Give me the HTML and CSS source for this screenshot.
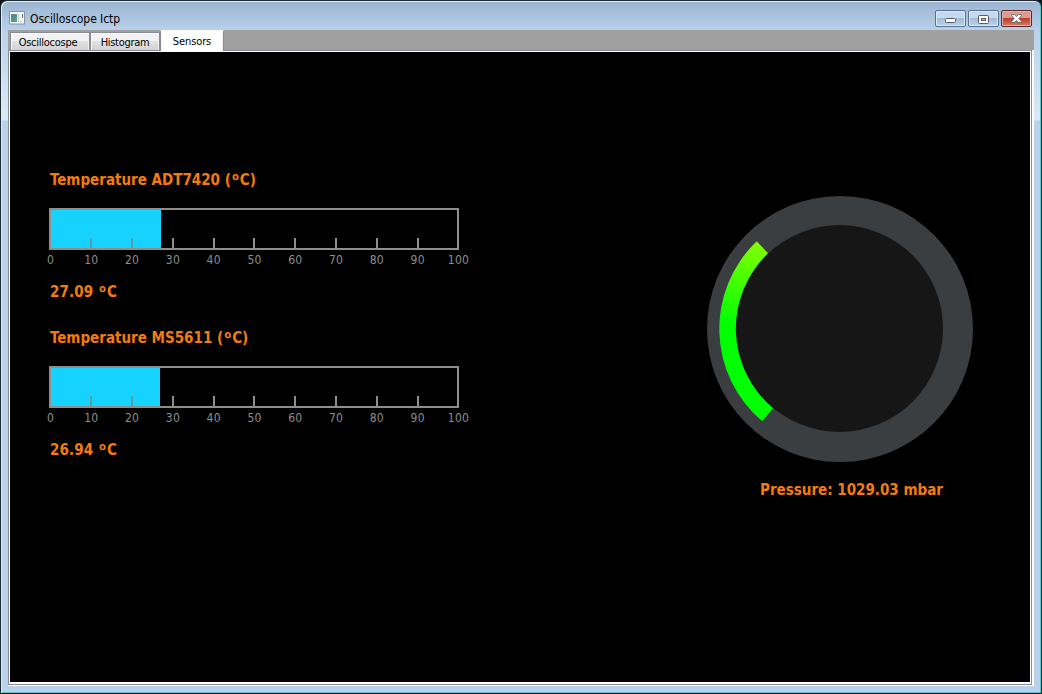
FILE: index.html
```html
<!DOCTYPE html>
<html lang="en">
<head>
<meta charset="utf-8">
<title>Oscilloscope Ictp</title>
<link rel="stylesheet" href="styles.css">
</head>
<body>
<div class="window">
  <header class="titlebar">
    <svg class="app-icon" width="16" height="14" viewBox="0 0 16 14">
      <defs><linearGradient id="ic" x1="0" y1="0" x2="1" y2="1"><stop offset="0" stop-color="#4b7fa6"/><stop offset="1" stop-color="#58a878"/></linearGradient></defs>
      <rect x=".5" y=".5" width="15" height="12.500" fill="#f4f6f6" stroke="#8b9399"/>
      <rect x="2" y="3" width="6" height="8" fill="url(#ic)"/>
      <path d="M9.500 3v8M11 10.500h2" stroke="#c4cacc" fill="none"/>
      <path d="M13.500 3v4" stroke="#477486" fill="none"/>
    </svg>
    <h1 class="title">Oscilloscope Ictp</h1>
    <div class="controls">
      <button class="control" aria-label="Minimize"><svg width="11" height="5"><rect x=".5" y=".5" width="10" height="4" rx="1" fill="#fff" stroke="#535b68"/></svg></button>
      <button class="control" aria-label="Maximize"><svg width="11" height="9"><rect x=".5" y=".5" width="10" height="8" rx="1" fill="#fff" stroke="#535b68"/><rect x="3.500" y="3.500" width="4" height="2" fill="#a9c3df" stroke="#535b68"/></svg></button>
      <button class="control close" aria-label="Close"><svg width="11" height="9" viewBox="0 0 11 9"><path d="M.5.5h3l2 2 2-2h3v1l-2.600 3 2.600 3v1h-3l-2-2-2 2h-3v-1l2.600-3-2.600-3z" fill="#fff" stroke="#555c6b" stroke-width=".8"/></svg></button>
    </div>
  </header>
  <main class="client">
    <nav class="tabs">
      <div class="tab first">Oscillocospe</div>
      <div class="tab second">Histogram</div>
      <div class="tab active">Sensors</div>
    </nav>
    <div class="pane">
      <section class="view">
        <div class="thermometers">
          <article class="thermo">
            <h2 class="label">Temperature ADT7420 (<span class="degree">º</span>C)</h2>
            <svg class="scale" width="410" height="42">
              <rect x="1" y="1" width="408" height="40" fill="none" stroke="#8e8e8e" stroke-width="2"/>
              <rect x="2" y="2" width="110" height="38" fill="#16d2ff"/>
              <path d="M42 30v10M83 30v10" stroke="#5d9aa9" stroke-width="2"/>
              <path d="M124 30v10M165 30v10M205 30v10M246 30v10M287 30v10M328 30v10M369 30v10" stroke="#8e8e8e" stroke-width="2"/>
            </svg>
            <div class="numbers"><span>0</span><span>10</span><span>20</span><span>30</span><span>40</span><span>50</span><span>60</span><span>70</span><span>80</span><span>90</span><span>100</span></div>
            <p class="label value">27.09 <span class="degree">º</span>C</p>
          </article>
          <article class="thermo">
            <h2 class="label">Temperature MS5611 (<span class="degree">º</span>C)</h2>
            <svg class="scale" width="410" height="42">
              <rect x="1" y="1" width="408" height="40" fill="none" stroke="#8e8e8e" stroke-width="2"/>
              <rect x="2" y="2" width="109" height="38" fill="#16d2ff"/>
              <path d="M42 30v10M83 30v10" stroke="#5d9aa9" stroke-width="2"/>
              <path d="M124 30v10M165 30v10M205 30v10M246 30v10M287 30v10M328 30v10M369 30v10" stroke="#8e8e8e" stroke-width="2"/>
            </svg>
            <div class="numbers"><span>0</span><span>10</span><span>20</span><span>30</span><span>40</span><span>50</span><span>60</span><span>70</span><span>80</span><span>90</span><span>100</span></div>
            <p class="label value">26.94 <span class="degree">º</span>C</p>
          </article>
        </div>
        <div class="pressure">
          <svg class="dial" width="266" height="266" viewBox="0 0 266 266">
            <defs><linearGradient id="arc" gradientUnits="userSpaceOnUse" x1="40" y1="45" x2="16" y2="128"><stop offset="0" stop-color="#80ff00"/><stop offset="1" stop-color="#00ff00"/></linearGradient></defs>
            <circle cx="133" cy="133" r="133" fill="#3b3e40"/>
            <circle cx="132.500" cy="132.500" r="103.500" fill="#161616"/>
            <path d="M55.300 225.300A121 121 0 0 1 49.700 45.300L61 57.300A104 104 0 0 0 66 212.300Z" fill="url(#arc)"/>
          </svg>
          <p class="label reading">Pressure: 1029.03 mbar</p>
        </div>
      </section>
    </div>
  </main>
</div>
</body>
</html>
```
FILE: styles.css
```css
* { box-sizing: border-box; }
body {
  margin: 0;
  background: #10171c;
  font-family: "DejaVu Sans Condensed", "DejaVu Sans", sans-serif;
  font-stretch: condensed;
}
h1, h2, p { margin: 0; font-weight: normal; }
.window {
  width: 1042px;
  height: 694px;
  padding: 0 7px 7px;
  border: 1px solid #1b2830;
  border-bottom-color: #000;
  border-radius: 7px 7px 0 0;
  background: linear-gradient(#9bb4d1 0, #b9d1ea 30px, #cbdff2 75px, #dce9f7 119px, #b9d1ea 120px);
  box-shadow: inset 1px 1px #e2edf7, inset -1px -1px #55c4d3;
}
.titlebar {
  display: flex;
  height: 29px;
  padding-left: 1px;
}
.app-icon { margin: 10px 5px 0 0; }
.title {
  flex: 1;
  padding-top: 10px;
  font-size: 12px;
  line-height: 16px;
  letter-spacing: -0.05px;
  color: #000;
}
.controls {
  display: flex;
  gap: 2px;
  padding: 9px 2px 0 0;
}
.control {
  display: flex;
  align-items: center;
  justify-content: center;
  width: 31px;
  height: 17px;
  padding: 1px 0 0;
  border: 1px solid #56708f;
  border-radius: 2px;
  background: linear-gradient(#c6d9ed 0 45%, #9fb9d6 46%, #bcd4eb);
  box-shadow: inset 0 0 0 1px #dce9f5;
}
.control:first-child { padding-top: 4px; }
.control svg { display: block; }
.control.close {
  padding-top: 0;
  border-color: #5b2929;
  background: linear-gradient(#df9b91 0 45%, #bd3a29 46%, #d47b63);
  box-shadow: inset 0 0 0 1px #e7b2a8;
}
.client {
  width: 1026px;
  height: 656px;
  background: #fff;
}
.tabs {
  display: flex;
  align-items: flex-end;
  height: 20px;
  padding-left: 2px;
  background: #a0a0a0;
}
.tab {
  height: 18px;
  border: 1px solid #898c95;
  border-width: 1px 1px 0;
  background: linear-gradient(#f2f2f2 0 48%, #e2e2e2 50%, #d2d2d2);
  box-shadow: inset 1px 1px #fafafa, inset -1px 0 #f2f2f2;
  font-size: 11px;
  line-height: 19px;
  letter-spacing: -0.3px;
  text-align: center;
  white-space: nowrap;
}
.tab.first { width: 80px; padding-right: 4px; letter-spacing: -0.25px; }
.tab.second { width: 70px; }
.tab.active {
  position: relative;
  width: 64px;
  height: 21px;
  margin-bottom: -1px;
  border-top-color: #fff;
  background: #fff;
  line-height: 21px;
  letter-spacing: -0.1px;
}
.pane {
  width: 1024px;
  height: 635px;
  border: 1px solid #898c95;
  padding: 1px 1px 2px;
}
.view {
  display: flex;
  justify-content: space-between;
  width: 1020px;
  height: 630px;
  padding: 117px 57px 0 39px;
  background: #000;
}
.thermo { width: 410px; height: 158px; }
.label {
  font-size: 15px;
  font-weight: bold;
  line-height: 22px;
  color: #f57c0c;
  white-space: nowrap;
}
.degree {
  display: inline-block;
  width: 9px;
  font-family: "Noto Sans", sans-serif;
  font-size: 18px;
  line-height: 1px;
  text-align: center;
  vertical-align: -2px;
}
.thermo .label { padding-left: 1px; letter-spacing: 0; }
.scale { display: block; margin-top: 17px; }
.numbers {
  display: flex;
  justify-content: space-between;
  margin: 1px -19.500px 0 -18.500px;
  font-size: 12px;
  line-height: 18px;
  letter-spacing: 0.2px;
  color: #8e8e8e;
}
.numbers span { width: 40px; text-align: center; }
.thermo .value { margin-top: 12px; letter-spacing: 0.1px; }
.pressure { padding-top: 27px; }
.dial { display: block; }
.reading { margin: 17px 0 0 53px; }
```
